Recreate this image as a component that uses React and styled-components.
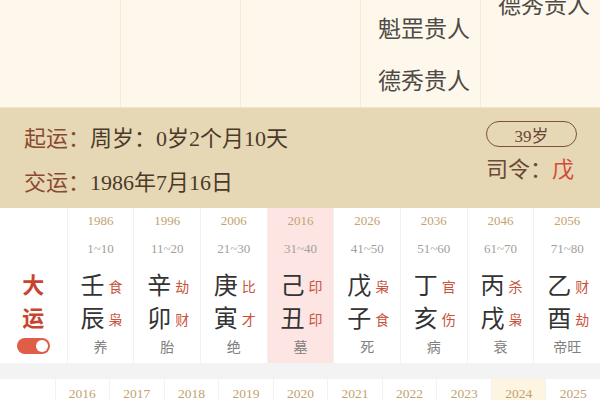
import React from "react";
import styled, { createGlobalStyle } from "styled-components";

const Global = createGlobalStyle`
  html, body { margin: 0; padding: 0; background: #ffffff; }
  body { width: 600px; height: 400px; overflow: hidden; font-family: "Liberation Serif", "Noto Sans CJK SC", serif; }
  * { box-sizing: border-box; }
`;

const SANS = `"Noto Sans CJK SC", "Noto Sans", sans-serif`;
const MIX = `"Liberation Serif", "Noto Sans CJK SC", serif`;

const Page = styled.div`
  width: 600px;
  height: 400px;
  overflow: hidden;
  display: flex;
  flex-direction: column;
`;

const ShenshaGrid = styled.div`
  height: 108px;
  flex: none;
  display: grid;
  grid-template-columns: repeat(5, 1fr);
  background: #fdf8eb;
  border-bottom: 1px solid #efe3c8;
  overflow: hidden;
`;

const ShenshaCol = styled.div`
  display: flex;
  flex-direction: column;
  justify-content: flex-end;
  align-items: center;
  gap: 22px;
  padding-bottom: ${(p) => p.$pb}px;
  padding-left: 7px;
  border-left: ${(p) => (p.$first ? "none" : "1px solid #f4ead6")};
  min-height: 0;
`;

const ShenshaText = styled.div`
  font-family: ${SANS};
  font-size: 23px;
  line-height: 30px;
  color: #4f4a45;
  white-space: nowrap;
`;

const Band = styled.div`
  height: 100px;
  flex: none;
  background: #e7d8b5;
  display: flex;
  justify-content: space-between;
  align-items: flex-start;
  padding: 0 24px 0 24px;
`;

const InfoLines = styled.div`
  display: flex;
  flex-direction: column;
  padding-top: 13px;
  gap: 11px;
`;

const Line = styled.div`
  font-family: ${MIX};
  font-size: 22px;
  line-height: 30px;
  color: #4b3a2b;
  white-space: nowrap;
`;

const Label = styled.span`
  font-family: ${SANS};
  color: #8a4a30;
`;

const Side = styled.div`
  display: flex;
  flex-direction: column;
  align-items: center;
  padding-top: 13px;
  gap: 5px;
  margin-right: -1px;
`;

const AgePill = styled.div`
  width: 91px;
  height: 26px;
  border: 1.5px solid #7a5240;
  border-radius: 13px;
  display: flex;
  align-items: center;
  justify-content: center;
  font-family: ${MIX};
  font-size: 17px;
  color: #6a4535;
`;

const Siling = styled.div`
  font-family: ${SANS};
  font-size: 22px;
  line-height: 30px;
  color: #6b4a38;
  white-space: nowrap;
  margin-left: -3px;
`;

const Red = styled.span`
  color: #d24b3a;
`;

const DayunRow = styled.div`
  height: 155px;
  flex: none;
  display: grid;
  grid-template-columns: repeat(9, 1fr);
  background: #ffffff;
`;

const LabelCell = styled.div`
  display: flex;
  flex-direction: column;
  align-items: center;
  padding-top: 59px;
`;

const BigRed = styled.div`
  font-family: ${SANS};
  font-weight: 700;
  font-size: 22px;
  line-height: 33px;
  color: #c9442f;
`;

const Toggle = styled.div`
  margin-top: 5px;
  width: 33px;
  height: 16px;
  border-radius: 8px;
  background: #e05d48;
  display: flex;
  justify-content: flex-end;
  align-items: center;
  padding: 2px;
`;

const Knob = styled.div`
  width: 12px;
  height: 12px;
  border-radius: 50%;
  background: #ffffff;
`;

const DayunCell = styled.div`
  display: flex;
  flex-direction: column;
  align-items: center;
  background: ${(p) => (p.$active ? "#fde5e4" : "#ffffff")};
  border-left: 1px solid #f3f1ee;
`;

const Year = styled.div`
  font-family: ${MIX};
  font-size: 13px;
  line-height: 26px;
  color: #c3a271;
`;

const Age = styled.div`
  font-family: ${MIX};
  font-size: 13px;
  line-height: 28px;
  margin-top: 1px;
  color: #a3a09c;
`;

const PillarRow = styled.div`
  display: flex;
  align-items: center;
  gap: 4px;
  height: 33px;
  margin-top: ${(p) => p.$mt || 0}px;
  padding-left: 2px;
`;

const Char = styled.span`
  font-family: ${SANS};
  font-size: 24px;
  line-height: 33px;
  color: #333333;
`;

const Shi = styled.span`
  font-family: ${SANS};
  font-size: 14px;
  line-height: 20px;
  padding-top: 4px;
  color: #c9533c;
`;

const ZS = styled.div`
  font-family: ${SANS};
  font-size: 14px;
  line-height: 26px;
  color: #808080;
`;

const Gap = styled.div`
  height: 16px;
  flex: none;
  background: #f3f3f4;
`;

const LiunianRow = styled.div`
  flex: 1;
  display: grid;
  grid-template-columns: repeat(11, 1fr);
  background: #ffffff;
`;

const LnCell = styled.div`
  display: flex;
  justify-content: center;
  padding-top: 5px;
  font-family: ${MIX};
  font-size: 13.5px;
  line-height: 20px;
  color: #c3a271;
  background: ${(p) => (p.$active ? "#fdf4e1" : "#ffffff")};
  border-left: ${(p) => (p.$edge ? "none" : "1px solid #f3f2f0")};
`;

const dayun = [
  { y: "1986", a: "1~10", g: "壬", gs: "食", z: "辰", zs: "枭", c: "养" },
  { y: "1996", a: "11~20", g: "辛", gs: "劫", z: "卯", zs: "财", c: "胎" },
  { y: "2006", a: "21~30", g: "庚", gs: "比", z: "寅", zs: "才", c: "绝" },
  { y: "2016", a: "31~40", g: "己", gs: "印", z: "丑", zs: "印", c: "墓", active: true },
  { y: "2026", a: "41~50", g: "戊", gs: "枭", z: "子", zs: "食", c: "死" },
  { y: "2036", a: "51~60", g: "丁", gs: "官", z: "亥", zs: "伤", c: "病" },
  { y: "2046", a: "61~70", g: "丙", gs: "杀", z: "戌", zs: "枭", c: "衰" },
  { y: "2056", a: "71~80", g: "乙", gs: "财", z: "酉", zs: "劫", c: "帝旺" },
];

const years = ["2016", "2017", "2018", "2019", "2020", "2021", "2022", "2023", "2024", "2025"];

const shensha = [
  { items: [], pb: 12 },
  { items: [], pb: 12 },
  { items: [], pb: 12 },
  { items: ["魁罡贵人", "德秀贵人"], pb: 13 },
  { items: ["德秀贵人"], pb: 89 },
];

export default function App() {
  return (
    <>
      <Global />
      <Page>
        <ShenshaGrid>
          {shensha.map((col, i) => (
            <ShenshaCol key={i} $pb={col.pb} $first={i === 0}>
              {col.items.map((t, j) => (
                <ShenshaText key={j}>{t}</ShenshaText>
              ))}
            </ShenshaCol>
          ))}
        </ShenshaGrid>
        <Band>
          <InfoLines>
            <Line>
              <Label>起运：</Label>周岁：0岁2个月10天
            </Line>
            <Line>
              <Label>交运：</Label>1986年7月16日
            </Line>
          </InfoLines>
          <Side>
            <AgePill>39岁</AgePill>
            <Siling>
              司令：<Red>戊</Red>
            </Siling>
          </Side>
        </Band>
        <DayunRow>
          <LabelCell>
            <BigRed>大</BigRed>
            <BigRed>运</BigRed>
            <Toggle>
              <Knob />
            </Toggle>
          </LabelCell>
          {dayun.map((d) => (
            <DayunCell key={d.y} $active={d.active}>
              <Year>{d.y}</Year>
              <Age>{d.a}</Age>
              <PillarRow $mt={4}>
                <Char>{d.g}</Char>
                <Shi>{d.gs}</Shi>
              </PillarRow>
              <PillarRow>
                <Char>{d.z}</Char>
                <Shi>{d.zs}</Shi>
              </PillarRow>
              <ZS>{d.c}</ZS>
            </DayunCell>
          ))}
        </DayunRow>
        <Gap />
        <LiunianRow>
          <LnCell $edge />
          {years.map((y) => (
            <LnCell key={y} $active={y === "2024"}>
              {y}
            </LnCell>
          ))}
        </LiunianRow>
      </Page>
    </>
  );
}
